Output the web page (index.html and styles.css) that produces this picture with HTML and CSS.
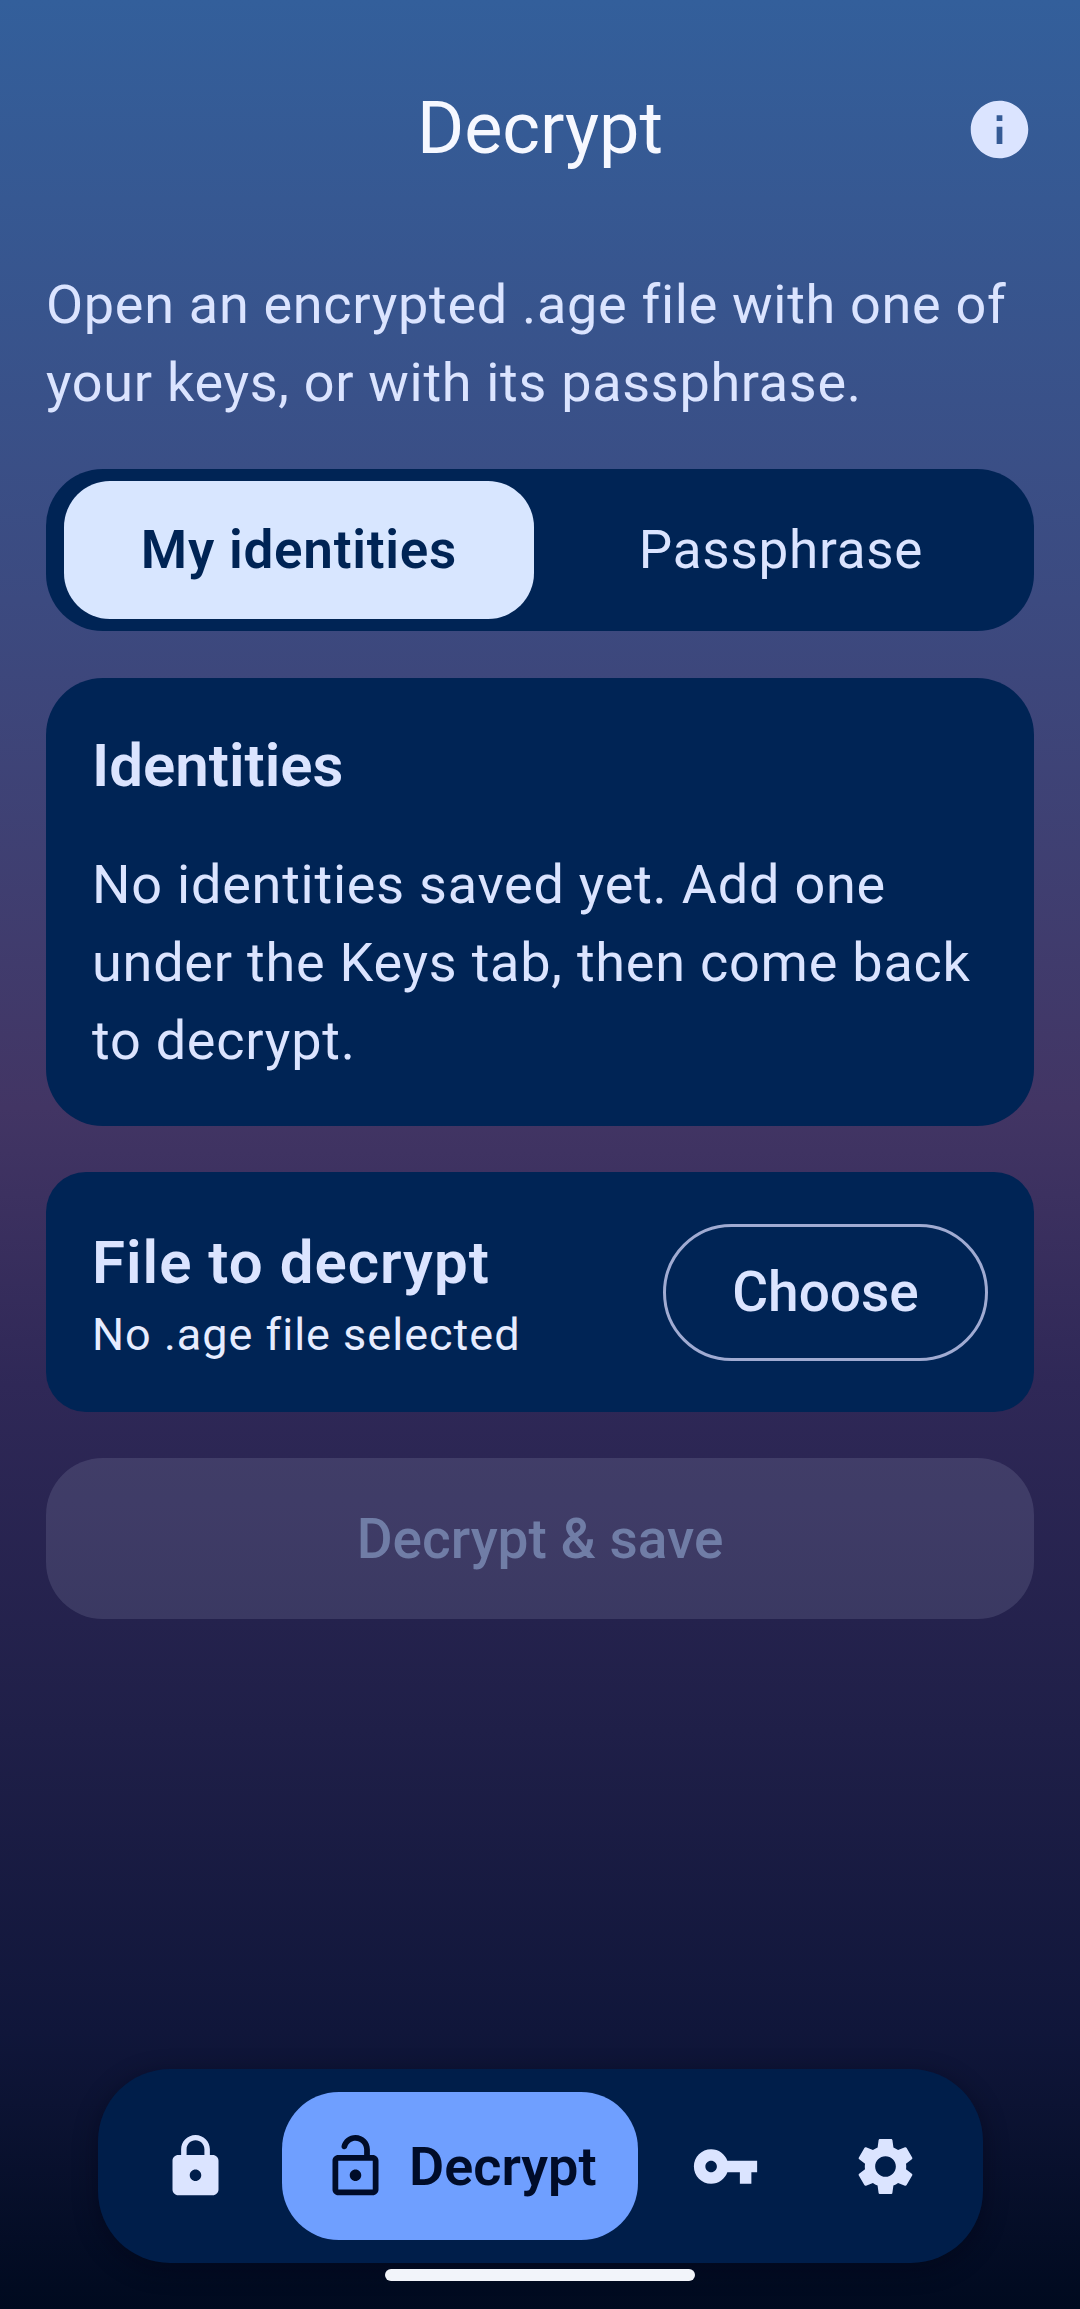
FILE: index.html
```html
<!DOCTYPE html>
<html lang="en">
<head>
<meta charset="utf-8">
<title>Decrypt</title>
<link rel="stylesheet" href="styles.css">
</head>
<body>
<div class="screen">
  <header class="topbar">
    <h1 class="topbar-title">Decrypt</h1>
    <svg class="icon info-icon" viewBox="0 0 24 24"><path d="M12 2C6.48 2 2 6.48 2 12s4.48 10 10 10 10-4.48 10-10S17.52 2 12 2zm1 15h-2v-6h2v6zm0-8h-2V7h2v2z"/></svg>
  </header>
  <main class="content">
    <p class="intro">Open an encrypted .age file with one of your keys, or with its passphrase.</p>
    <div class="segments">
      <div class="segment segment-on">My identities</div>
      <div class="segment">Passphrase</div>
    </div>
    <section class="card identities">
      <h2 class="card-title">Identities</h2>
      <p class="card-body">No identities saved yet. Add one under the Keys tab, then come back to decrypt.</p>
    </section>
    <section class="card file-card">
      <div class="file-text">
        <h2 class="file-title">File to decrypt</h2>
        <p class="file-sub">No .age file selected</p>
      </div>
      <div class="choose">Choose</div>
    </section>
    <div class="primary-disabled">Decrypt &amp; save</div>
  </main>
  <nav class="navbar">
    <div class="nav-item">
      <svg class="icon" viewBox="0 0 24 24"><path d="M18 8h-1V6c0-2.76-2.24-5-5-5S7 3.24 7 6v2H6c-1.1 0-2 .9-2 2v10c0 1.1.9 2 2 2h12c1.1 0 2-.9 2-2V10c0-1.1-.9-2-2-2zm-6 9c-1.1 0-2-.9-2-2s.9-2 2-2 2 .9 2 2-.9 2-2 2zm3.1-9H8.9V6c0-1.71 1.39-3.1 3.1-3.1 1.71 0 3.1 1.39 3.1 3.1v2z"/></svg>
    </div>
    <div class="nav-item nav-active">
      <svg class="icon" viewBox="0 0 24 24"><path d="M12 17c1.1 0 2-.9 2-2s-.9-2-2-2-2 .9-2 2 .9 2 2 2zm6-9h-1V6c0-2.76-2.24-5-5-5-2.28 0-4.27 1.54-4.84 3.75-.14.54.18 1.08.72 1.22.53.14 1.08-.18 1.22-.72C9.44 3.93 10.63 3 12 3c1.65 0 3 1.35 3 3v2H6c-1.1 0-2 .9-2 2v10c0 1.1.9 2 2 2h12c1.1 0 2-.9 2-2V10c0-1.1-.9-2-2-2zm0 12H6V10h12v10z"/></svg>
      <span class="nav-label">Decrypt</span>
    </div>
    <div class="nav-item">
      <svg class="icon" viewBox="0 0 24 24"><path d="M12.65 10C11.83 7.67 9.61 6 7 6c-3.31 0-6 2.69-6 6s2.69 6 6 6c2.61 0 4.83-1.67 5.65-4H17v4h4v-4h2v-4H12.65zM7 14c-1.1 0-2-.9-2-2s.9-2 2-2 2 .9 2 2-.9 2-2 2z"/></svg>
    </div>
    <div class="nav-item">
      <svg class="icon" viewBox="0 0 24 24"><path d="M19.14 12.94c.04-.3.06-.61.06-.94 0-.32-.02-.64-.07-.94l2.03-1.58c.18-.14.23-.41.12-.61l-1.92-3.32c-.12-.22-.37-.29-.59-.22l-2.39.96c-.5-.38-1.03-.7-1.62-.94l-.36-2.54c-.04-.24-.24-.41-.48-.41h-3.84c-.24 0-.43.17-.47.41l-.36 2.54c-.59.24-1.13.57-1.62.94l-2.39-.96c-.22-.08-.47 0-.59.22L2.74 8.87c-.12.21-.08.47.12.61l2.03 1.58c-.05.3-.09.63-.09.94s.02.64.07.94l-2.03 1.58c-.18.14-.23.41-.12.61l1.92 3.32c.12.22.37.29.59.22l2.39-.96c.5.38 1.03.7 1.62.94l.36 2.54c.05.24.24.41.48.41h3.84c.24 0 .44-.17.47-.41l.36-2.54c.59-.24 1.13-.56 1.62-.94l2.39.96c.22.08.47 0 .59-.22l1.92-3.32c.12-.22.07-.47-.12-.61l-2.01-1.58zM12 15.6c-1.98 0-3.6-1.62-3.6-3.6s1.62-3.6 3.6-3.6 3.6 1.62 3.6 3.6-1.62 3.6-3.6 3.6z"/></svg>
    </div>
  </nav>
  <div class="home-indicator"></div>
</div>
</body>
</html>
```
FILE: styles.css
```css
* { box-sizing: border-box; }
html, body { margin: 0; padding: 0; }
body {
  width: 1080px;
  height: 2309px;
  overflow: hidden;
  font-family: Roboto, "Liberation Sans", sans-serif;
}
.screen {
  position: relative;
  width: 1080px;
  height: 2309px;
  display: flex;
  flex-direction: column;
  background: linear-gradient(180deg, #335f9b 0%, #3c4a80 26%, #423564 48%, #2f2857 60%, #1f1f48 75%, #10163a 88%, #000a1f 100%);
  color: #dbe4ff;
}
.icon { width: 69px; height: 69px; fill: currentColor; display: block; flex: none; }
.topbar {
  position: relative;
  height: 266px;
  display: flex;
  justify-content: center;
  padding-top: 90px;
}
.topbar-title {
  margin: 0;
  font-size: 72px;
  font-weight: 400;
  line-height: 78px;
  color: #f6f8ff;
}
.info-icon { position: absolute; top: 95px; right: 46px; }
.content { padding: 0 46px; display: flex; flex-direction: column; }
.intro {
  margin: 0 0 47px;
  font-size: 54px;
  line-height: 78px;
  letter-spacing: 0.7px;
}
.segments {
  height: 162px;
  padding: 12px 18px;
  display: flex;
  gap: 12px;
  background: #002455;
  border-radius: 57px;
  margin-bottom: 47px;
}
.segment {
  flex: 1;
  display: flex;
  align-items: center;
  justify-content: center;
  border-radius: 46px;
  font-size: 53px;
  letter-spacing: 0.75px;
}
.segment-on { background: #d8e6ff; color: #002455; font-weight: 600; }
.card { background: #002455; margin-bottom: 46px; }
.identities { padding: 46px; border-radius: 57px; }
.card-title { margin: 0 0 38px; font-size: 60px; font-weight: 600; line-height: 84px; }
.card-body { margin: 0; font-size: 54px; line-height: 78px; letter-spacing: 0.77px; }
.file-card {
  height: 240px;
  padding: 0 46px;
  border-radius: 40px;
  display: flex;
  align-items: center;
  justify-content: space-between;
}
.file-text { padding-top: 8px; }
.file-title { margin: 0; font-size: 60px; font-weight: 600; line-height: 68px; letter-spacing: 1px; }
.file-sub { margin: 10px 0 0; font-size: 45px; line-height: 56px; letter-spacing: 1px; color: #e6ecff; }
.choose {
  width: 325px;
  height: 137px;
  border: 3px solid #a0abd2;
  border-radius: 69px;
  display: flex;
  align-items: center;
  justify-content: center;
  font-size: 55px;
  font-weight: 500;
}
.primary-disabled {
  height: 161px;
  border-radius: 57px;
  background: rgba(219, 228, 255, 0.12);
  color: #707da6;
  display: flex;
  align-items: center;
  justify-content: center;
  font-size: 55px;
  font-weight: 500;
}
.navbar {
  position: absolute;
  left: 98px;
  bottom: 46px;
  width: 885px;
  height: 194px;
  padding: 0 17px;
  display: flex;
  align-items: center;
  background: #001e4a;
  border-radius: 72px;
  box-shadow: 0 6px 24px rgba(0, 5, 20, 0.45);
}
.nav-item {
  width: 160px;
  height: 148px;
  display: flex;
  align-items: center;
  justify-content: center;
}
.nav-active {
  width: 356px;
  margin: 0 7px;
  padding: 0 41px 0 39px;
  gap: 19px;
  background: #6f9fff;
  color: #000c29;
  border-radius: 57px;
  justify-content: flex-start;
}
.nav-label { font-size: 54px; font-weight: 600; }
.home-indicator {
  position: absolute;
  left: 385px;
  bottom: 28px;
  width: 310px;
  height: 12px;
  border-radius: 6px;
  background: #f2f4fa;
}
```
